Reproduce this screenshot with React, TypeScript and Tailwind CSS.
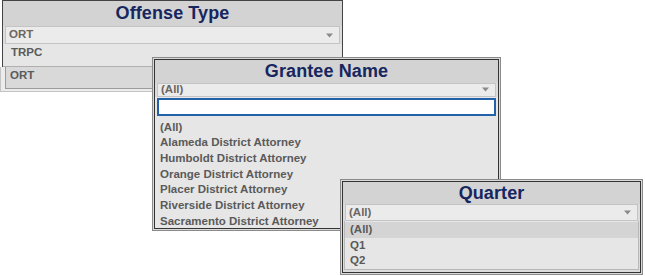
import React from "react";

const font = { fontFamily: "'Liberation Sans', Arial, sans-serif" };

function Arrow() {
  return (
    <svg width="7" height="5" viewBox="0 0 7 5" className="shrink-0">
      <path d="M0 0.5 L7 0.5 L3.5 4.5 Z" fill="#8a8a8a" />
    </svg>
  );
}

function Title({ text, h }: { text: string; h: string }) {
  return (
    <div
      className={`${h} bg-[#d3d3d3] flex items-center justify-center text-[18px] font-bold text-[#16265f] tracking-[0.1px]`}
    >
      {text}
    </div>
  );
}

function DropRow({ value }: { value: string }) {
  return (
    <div className="h-[18px] px-[2px] bg-[#dcdcdc]">
      <div className="h-full border border-[#c4c4c4] bg-[#ebebeb] flex items-center justify-between pl-[3px] pr-[6px]">
        <span className="text-[11.5px] font-bold text-[#6b6660] leading-none">{value}</span>
        <Arrow />
      </div>
    </div>
  );
}

function Item({ text, active }: { text: string; active?: boolean }) {
  return (
    <div
      className={`h-[15.7px] flex items-center pl-[5px] text-[11.5px] font-bold text-[#5a5a5a] leading-none ${
        active ? "bg-[#d4d4d4]" : ""
      }`}
    >
      {text}
    </div>
  );
}

export default function App() {
  return (
    <div className="relative w-[645px] h-[276px] bg-white overflow-hidden" style={font}>
      {/* Offense Type */}
      <div className="absolute left-0 top-0 w-[345px] h-[92px] flex flex-col">
        <div className="mx-[2px] h-[67px] border-x border-t border-[#444] flex flex-col">
          <Title text="Offense Type" h="h-[25px]" />
          <DropRow value="ORT" />
          <div className="flex-1 bg-[#e6e6e6] border-b border-[#b0b0b0] pl-[8px] pt-0 text-[11.5px] font-bold text-[#5a5a5a]">
            TRPC
          </div>
        </div>
        <div className="flex-1 border-l border-b border-[#c4c4c4] bg-[#ececec] pl-[4px] pb-[2px]">
          <div className="h-full border-l border-b border-[#9c9c9c] bg-[#d9d9d9] pl-[4px] pt-0 text-[11.5px] font-bold text-[#5a5a5a]">
            ORT
          </div>
        </div>
      </div>

      {/* Grantee Name */}
      <div className="absolute left-[152px] top-[57px] w-[349px] h-[174px] border border-[#8a8a8a] bg-[#dadada] p-px">
        <div className="h-full border border-[#333] flex flex-col bg-[#e6e6e6]">
          <Title text="Grantee Name" h="h-[23px]" />
          <DropRow value="(All)" />
          <div className="px-[2px] pt-px bg-[#e6e6e6]">
            <div className="h-[18px] border-2 border-[#2461ab] bg-white" />
          </div>
          <div className="flex-1 pt-[4px]">
            <Item text="(All)" />
            <Item text="Alameda District Attorney" />
            <Item text="Humboldt District Attorney" />
            <Item text="Orange District Attorney" />
            <Item text="Placer District Attorney" />
            <Item text="Riverside District Attorney" />
            <Item text="Sacramento District Attorney" />
          </div>
        </div>
      </div>

      {/* Quarter */}
      <div className="absolute left-[340px] top-[179px] w-[303px] h-[96px] border border-[#8a8a8a] bg-[#dadada] p-px">
        <div className="h-full border border-[#333] flex flex-col bg-[#dcdcdc]">
          <Title text="Quarter" h="h-[22px]" />
          <DropRow value="(All)" />
          <div className="flex-1 px-px pb-[2px]">
            <div className="h-full border-x border-b border-[#b8b8b8] bg-[#e6e6e6] pt-px">
              <Item text="(All)" active />
              <Item text="Q1" />
              <Item text="Q2" />
            </div>
          </div>
        </div>
      </div>
    </div>
  );
}
